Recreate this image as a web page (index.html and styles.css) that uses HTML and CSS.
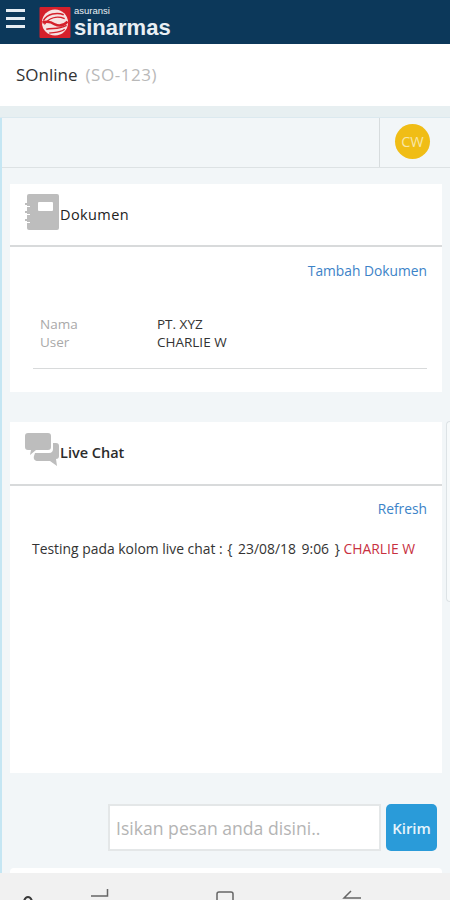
FILE: index.html
```html
<!DOCTYPE html>
<html lang="id">
<head>
<meta charset="utf-8">
<title>SOnline</title>
<link rel="stylesheet" href="styles.css">
</head>
<body>
<div class="page">
  <header class="topbar">
    <button class="burger" aria-label="Menu"><span></span><span></span><span></span></button>
    <svg class="logo-mark" width="32" height="31" viewBox="0 0 32 32">
      <rect width="32" height="32" rx="1" fill="#d5202b"/>
      <circle cx="16" cy="16" r="13.500" fill="#f6e3e3"/>
      <path d="M4 14C8 7 18 5 25 8" fill="none" stroke="#d5202b" stroke-width="1.500"/>
      <path d="M5 18C10 11 18 9 26 12" fill="none" stroke="#d5202b" stroke-width="1.500"/>
      <path d="M3 16C9 14 13 16 16 18C20 20 25 19 29 15" fill="none" stroke="#d5202b" stroke-width="2.600"/>
      <path d="M7 23C13 21 19 24 28 19" fill="none" stroke="#d5202b" stroke-width="1.500"/>
      <path d="M10 27C15 26 21 27 26 23" fill="none" stroke="#d5202b" stroke-width="1.500"/>
    </svg>
    <div class="brand">
      <span class="brand-small">asuransi</span>
      <span class="brand-big">sinarmas</span>
    </div>
  </header>

  <div class="titlebar">
    <span class="title">SOnline</span>
    <span class="code">(SO-123)</span>
  </div>

  <main class="content">
    <div class="strip"></div>
    <div class="inner">
      <div class="userbar">
        <div class="userbar-fill"></div>
        <div class="userbar-avatar"><span class="avatar">CW</span></div>
      </div>

      <section class="card card-doc">
        <div class="card-head">
          <svg class="card-icon" width="38" height="36" viewBox="0 0 38 36">
            <rect x="2" y="0" width="32" height="36" rx="2" fill="#bdbdbd"/>
            <rect x="13" y="8" width="15" height="9" rx="1" fill="#fff"/>
            <path d="M0 10h5M0 18h5M0 26h5" stroke="#bdbdbd" stroke-width="2"/>
            <path d="M2 12.500h3M2 20.500h3M2 28.500h3" stroke="#fff" stroke-width="1.200"/>
          </svg>
          <h2 class="card-title">Dokumen</h2>
        </div>
        <div class="card-link"><a class="link">Tambah Dokumen</a></div>
        <dl class="info">
          <dt>Nama</dt><dd>PT. XYZ</dd>
          <dt>User</dt><dd>CHARLIE W</dd>
        </dl>
      </section>

      <section class="card card-chat">
        <div class="card-head">
          <svg class="card-icon" width="38" height="36" viewBox="0 0 38 36">
            <path d="M3 0H23C25 0 26 1 26 3V14C26 16 25 17 23 17H11L5 22L6 17H3C1 17 0 16 0 14V3C0 1 1 0 3 0Z" fill="#bdbdbd"/>
            <path d="M27 10H31C33 10 34 11 34 13V23C34 25 33 26 31 26H31L32 33L25 28H13C10 28 8 26 9 23L10 20H24C27 20 28 18 28 16V10Z" fill="#bdbdbd"/>
          </svg>
          <h2 class="card-title">Live Chat</h2>
        </div>
        <div class="card-link"><a class="link">Refresh</a></div>
        <p class="message">Testing pada kolom live chat : <span class="stamp">{ 23/08/18 9:06 }</span> <span class="sender">CHARLIE W</span></p>
      </section>

      <form class="composer">
        <input class="composer-input" type="text" placeholder="Isikan pesan anda disini..">
        <button class="composer-send" type="button">Kirim</button>
      </form>
      <div class="next-card"></div>
    </div>
  </main>

  <nav class="sysnav">
    <svg class="nav-icon nav-a" width="10" height="4" viewBox="0 0 10 4"><path d="M1 5C2 2 4 1 5 1S8 2 9 5" fill="none" stroke="#3a3a3a" stroke-width="2"/></svg>
    <svg class="nav-icon nav-recent" width="20" height="10" viewBox="0 0 20 10"><path d="M1 7H17.500V0" fill="none" stroke="#666" stroke-width="1.500"/></svg>
    <svg class="nav-icon nav-home" width="20" height="9" viewBox="0 0 20 9"><path d="M2 9V3C2 2 3 1 4 1H16C17 1 18 2 18 3V9" fill="none" stroke="#666" stroke-width="1.500"/></svg>
    <svg class="nav-icon" width="20" height="10" viewBox="0 0 20 10"><path d="M9 1L2 8H19" fill="none" stroke="#666" stroke-width="1.500"/></svg>
  </nav>
  <div class="edge-handle"></div>
</div>
</body>
</html>
```

FILE: styles.css
```css
* { box-sizing: border-box; }

html, body {
  margin: 0;
  padding: 0;
  height: 900px;
  overflow: hidden;
  background: #fff;
}

body {
  font-family: "Open Sans", "Noto Sans", sans-serif;
  color: #333;
}

.page {
  position: relative;
  width: 450px;
  height: 900px;
  display: flex;
  flex-direction: column;
  overflow: hidden;
}

/* top bar */
.topbar {
  flex: 0 0 44px;
  display: flex;
  align-items: flex-start;
  background: #0c385a;
  padding: 7px 0 0 6px;
}

.burger {
  display: flex;
  flex-direction: column;
  gap: 5px;
  width: 19px;
  margin: 2px 14px 0 0;
  padding: 0;
  border: 0;
  background: none;
}

.burger span {
  display: block;
  height: 3px;
  background: #e6edf3;
}

.logo-mark { flex: none; }

.brand {
  display: flex;
  flex-direction: column;
  margin: 0 0 0 3px;
  color: #e9eff4;
  font-family: "Liberation Sans", Arial, sans-serif;
}

.brand-small {
  margin-top: -1px;
  font-size: 9.500px;
  line-height: 10px;
}

.brand-big {
  margin-top: 2px;
  font-size: 22px;
  line-height: 20px;
  font-weight: 700;
}

/* title */
.titlebar {
  flex: 0 0 62px;
  display: flex;
  align-items: center;
  gap: 8px;
  padding: 0 16px 2px;
  background: #fff;
  font-size: 17px;
}

.title { color: #333; }
.code { color: #b9b9b9; letter-spacing: 0.550px; }

/* content */
.content {
  flex: 1;
  min-height: 0;
  display: flex;
  flex-direction: column;
  background: #f2f6f8;
}

.strip {
  flex: 0 0 12px;
  background: #e7eff1;
  border-bottom: 1px solid #dbe9ef;
}

.inner {
  flex: 1;
  min-height: 0;
  border-left: 2px solid #c5e6f3;
  overflow: hidden;
}

.userbar {
  display: flex;
  height: 50px;
  border-bottom: 1px solid #dde2e4;
}

.userbar-fill { flex: 1; }

.userbar-avatar {
  flex: 0 0 71px;
  display: flex;
  align-items: flex-start;
  justify-content: flex-start;
  padding: 6px 0 0 15px;
  border-left: 1px solid #d7dcde;
}

.avatar {
  display: flex;
  align-items: center;
  justify-content: center;
  width: 35px;
  height: 35px;
  border-radius: 50%;
  background: #f0bd16;
  color: #f8e6a8;
  font-size: 14.500px;
}

/* cards */
.card {
  margin: 16px 8px 0;
  background: #fff;
}

.card-doc { height: 208px; }

.card-chat {
  height: 351px;
  margin-top: 30px;
}

.card-head {
  display: flex;
  align-items: flex-start;
  height: 63px;
  padding: 10px 0 0 15px;
  border-bottom: 2px solid #d8dadb;
}

.card-chat .card-head {
  height: 64px;
  padding-top: 11px;
}

.card-icon { flex: none; }

.card-title {
  margin: 11px 0 0 -3px;
  font-size: 14.500px;
  line-height: 20px;
  font-weight: 600;
  color: #2b2b2b;
}

.card-chat .card-title { margin-top: 10px; }

.card-doc .card-title {
  font-weight: 400;
  color: #222;
  letter-spacing: 0.400px;
}

.card-link {
  margin-top: 15px;
  padding-right: 15px;
  text-align: right;
  font-size: 13.800px;
  line-height: 18px;
}

.card-chat .card-link { margin-top: 14px; }

.link { color: #3c83c8; }

.info {
  display: grid;
  grid-template-columns: 117px 1fr;
  margin: 35px 15px 0 23px;
  padding: 0 0 17px 7px;
  border-bottom: 1px solid #d8dadb;
  font-size: 13.500px;
  line-height: 18px;
}

.info dt { color: #a9a9a9; }

.info dd {
  margin: 0;
  color: #333;
}

.message {
  margin: 22px 0 0 22px;
  font-size: 13.900px;
  line-height: 18px;
  color: #333;
  white-space: nowrap;
}

.stamp {
  margin-left: 1px;
  word-spacing: 2px;
}

.sender { color: #c8313f; }

/* composer */
.composer {
  display: flex;
  justify-content: flex-end;
  gap: 5px;
  margin-top: 31px;
  padding-right: 13px;
}

.composer-input {
  width: 273px;
  height: 47px;
  padding: 0 6px;
  border: 2px solid #e4e7e8;
  background: #fff;
  font: 17.600px "Open Sans", sans-serif;
  color: #333;
}

.composer-input::placeholder {
  color: #b4b4b4;
  opacity: 1;
}

.composer-send {
  width: 51px;
  height: 47px;
  padding: 0;
  border: 0;
  border-radius: 5px;
  background: #2a9bd9;
  color: #e6f4fb;
  font: 600 15px "Open Sans", sans-serif;
}

.next-card {
  height: 20px;
  margin: 17px 8px 0;
  background: #fff;
  border-radius: 4px 4px 0 0;
}

/* android nav */
.sysnav {
  flex: 0 0 27px;
  display: flex;
  align-items: flex-end;
  background: #f1f1f1;
  overflow: hidden;
  padding-left: 23px;
}

.nav-icon { flex: none; }
.nav-a { margin-right: 57px; }
.nav-recent { margin-right: 105px; transform: translateY(-1px); }
.nav-home { margin-right: 107px; }

/* edge of a drawer handle lying over the right margin */
.edge-handle {
  position: absolute;
  top: 421px;
  right: 0;
  width: 4px;
  height: 181px;
  border: 1px solid #dde3e6;
  border-right: 0;
  border-radius: 4px 0 0 4px;
  background: #f7fafb;
}
```
